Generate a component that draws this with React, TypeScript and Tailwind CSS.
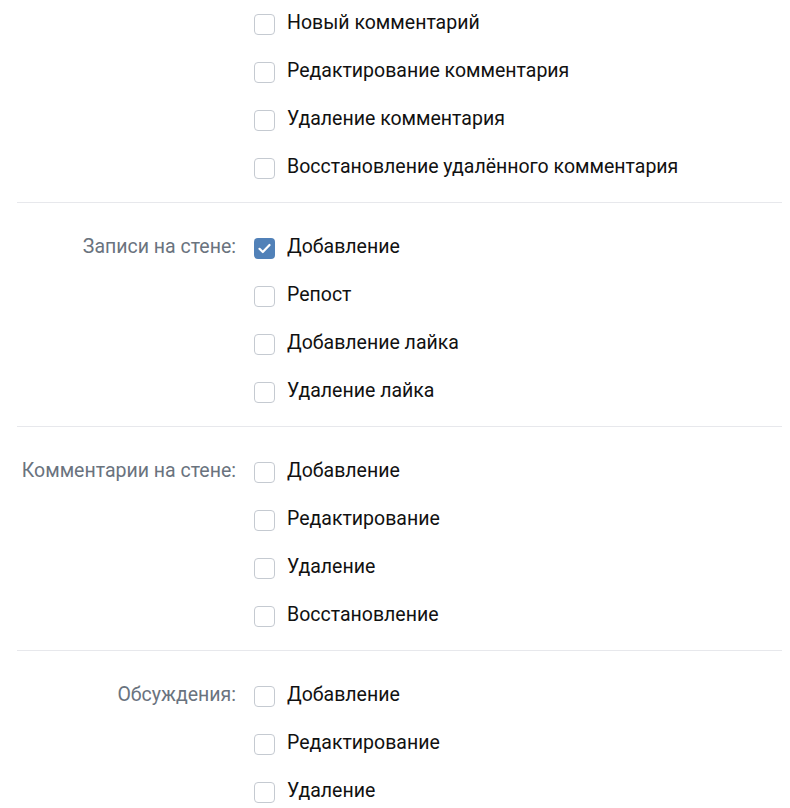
import { useState } from "react";

type Group = { label?: string; items: { text: string; checked?: boolean }[] };

const groups: Group[] = [
  {
    items: [
      { text: "Новый комментарий" },
      { text: "Редактирование комментария" },
      { text: "Удаление комментария" },
      { text: "Восстановление удалённого комментария" },
    ],
  },
  {
    label: "Записи на стене:",
    items: [
      { text: "Добавление", checked: true },
      { text: "Репост" },
      { text: "Добавление лайка" },
      { text: "Удаление лайка" },
    ],
  },
  {
    label: "Комментарии на стене:",
    items: [
      { text: "Добавление" },
      { text: "Редактирование" },
      { text: "Удаление" },
      { text: "Восстановление" },
    ],
  },
  {
    label: "Обсуждения:",
    items: [{ text: "Добавление" }, { text: "Редактирование" }, { text: "Удаление" }],
  },
];

const Checkbox = ({ initial, text }: { initial?: boolean; text: string }) => {
  const [on, setOn] = useState(!!initial);
  return (
    <label className="flex h-12 cursor-pointer items-center gap-3" onClick={() => setOn(!on)}>
      <span
        className={
          on
            ? "mt-[4px] flex h-[21px] w-[21px] shrink-0 items-center justify-center rounded-[4px] bg-[#5181b8]"
            : "mt-[4px] h-[21px] w-[21px] shrink-0 rounded-[4px] border border-[#c5cad1] bg-white"
        }
      >
        {on && (
          <svg width="13" height="11" viewBox="0 0 13 11" fill="none">
            <path d="M1.5 5.8 4.8 9 11.5 2" stroke="white" strokeWidth="2.2" strokeLinecap="round" strokeLinejoin="round" />
          </svg>
        )}
      </span>
      <span className="mt-[2px] text-[19.5px] text-[#111]">{text}</span>
    </label>
  );
};

export default function App() {
  return (
    <div className="min-h-screen bg-white px-[17px] font-['Roboto',sans-serif]">
      <div className="-mt-[2px] w-[765px]">
        {groups.map((g, i) => (
          <div
            key={i}
            className={i === 0 ? "flex gap-[18px] pb-3" : "flex gap-[18px] border-t border-[#e7e8ec] pt-[19px] pb-3"}
          >
            <div className="flex h-12 w-[219px] shrink-0 items-center justify-end pt-[2px] text-[19.5px] text-[#6a737e]">
              {g.label}
            </div>
            <div className="flex flex-col">
              {g.items.map((it, j) => (
                <Checkbox key={j} text={it.text} initial={it.checked} />
              ))}
            </div>
          </div>
        ))}
      </div>
    </div>
  );
}
